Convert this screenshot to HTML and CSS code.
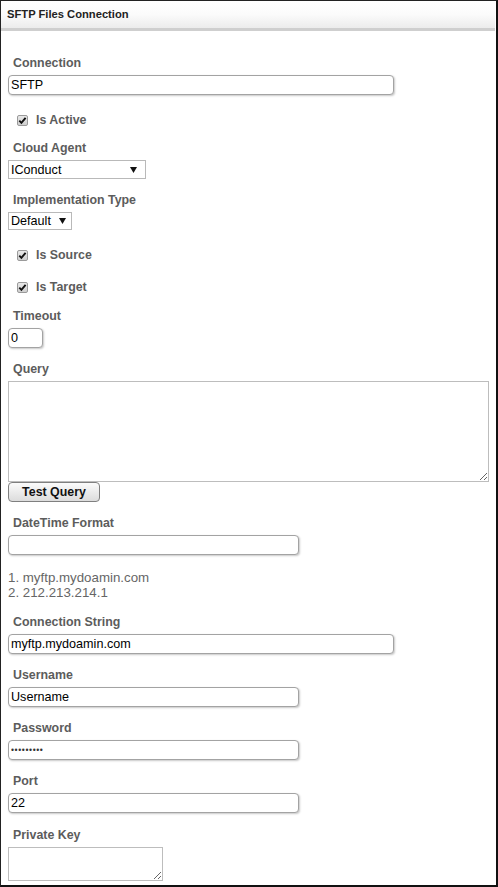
FILE: index.html
```html
<!DOCTYPE html>
<html>
<head>
<meta charset="utf-8">
<link rel="stylesheet" href="styles.css">
</head>
<body>
<div class="frame">
  <div class="header">SFTP Files Connection</div>
  <div class="form">
    <div class="field">
      <div class="label">Connection</div>
      <input class="input w-long" type="text" value="SFTP">
    </div>
    <div class="check first">
      <span class="box"><svg viewBox="0 0 11 11" width="11" height="11"><path d="M2.3 5.6 L4.4 7.8 L8.6 2.8" fill="none" stroke="#111" stroke-width="1.9"/></svg></span>
      <span class="check-text">Is Active</span>
    </div>
    <div class="field after-check">
      <div class="label">Cloud Agent</div>
      <div class="select w-agent"><span>IConduct</span><svg width="7" height="6" viewBox="0 0 7 6"><path d="M0 0 H7 L3.5 6 Z" fill="#111"/></svg></div>
    </div>
    <div class="field">
      <div class="label">Implementation Type</div>
      <div class="select w-impl"><span>Default</span><svg width="7" height="6" viewBox="0 0 7 6"><path d="M0 0 H7 L3.5 6 Z" fill="#111"/></svg></div>
    </div>
    <div class="check first">
      <span class="box"><svg viewBox="0 0 11 11" width="11" height="11"><path d="M2.3 5.6 L4.4 7.8 L8.6 2.8" fill="none" stroke="#111" stroke-width="1.9"/></svg></span>
      <span class="check-text">Is Source</span>
    </div>
    <div class="check">
      <span class="box"><svg viewBox="0 0 11 11" width="11" height="11"><path d="M2.3 5.6 L4.4 7.8 L8.6 2.8" fill="none" stroke="#111" stroke-width="1.9"/></svg></span>
      <span class="check-text">Is Target</span>
    </div>
    <div class="field after-check2">
      <div class="label">Timeout</div>
      <input class="input w-timeout" type="text" value="0">
    </div>
    <div class="field">
      <div class="label">Query</div>
      <div class="stack">
        <textarea class="area w-query"></textarea>
        <button class="button" type="button">Test Query</button>
      </div>
    </div>
    <div class="field">
      <div class="label">DateTime Format</div>
      <input class="input w-mid" type="text" value="">
    </div>
    <ol class="hints">
      <li>1. myftp.mydoamin.com</li>
      <li>2. 212.213.214.1</li>
    </ol>
    <div class="field after-hints">
      <div class="label">Connection String</div>
      <input class="input w-long" type="text" value="myftp.mydoamin.com">
    </div>
    <div class="field">
      <div class="label">Username</div>
      <input class="input w-mid" type="text" value="Username">
    </div>
    <div class="field">
      <div class="label">Password</div>
      <input class="input w-mid pwd" type="text" value="•••••••••">
    </div>
    <div class="field">
      <div class="label">Port</div>
      <input class="input w-mid" type="text" value="22">
    </div>
    <div class="field last">
      <div class="label">Private Key</div>
      <textarea class="area w-key"></textarea>
    </div>
  </div>
</div>
</body>
</html>
```

FILE: styles.css
```css
* { box-sizing: border-box; }
html, body { margin: 0; padding: 0; background: #fff; }
body { font-family: "Liberation Sans", Arial, sans-serif; }

.frame {
  width: 498px;
  height: 887px;
  border-top: 1px solid #222;
  border-left: 1px solid #222;
  border-right: 2px solid #111;
  border-bottom: 2px solid #111;
  overflow: hidden;
  background: #fff;
}

.header {
  height: 30px;
  padding: 5px 0 0 6px;
  background: linear-gradient(#ffffff 0%, #fbfbfb 50%, #ececec 100%);
  border-bottom: 3px solid #cfcfcf;
  font-size: 11.2px;
  font-weight: bold;
  color: #222;
  line-height: 16px;
  margin-right: 1px;
}

.form {
  display: flex;
  flex-direction: column;
  align-items: flex-start;
  gap: 13px;
  padding: 24px 0 0 7px;
}

.field {
  display: flex;
  flex-direction: column;
  align-items: flex-start;
  gap: 4px;
}
.field.after-check { margin-top: -1px; }
.field.after-check2 { margin-top: 0; }
.field.after-hints { margin-top: 1px; }
.field.last { margin-top: 1px; }

.label {
  padding-left: 5px;
  font-size: 12.4px;
  font-weight: bold;
  color: #5c5c5c;
  line-height: 16px;
  height: 16px;
}

.check {
  display: flex;
  align-items: center;
  gap: 8px;
  padding-left: 9px;
  height: 16px;
  margin-top: 3px;
}
.check.first { margin-top: 4px; }
.check + .check { margin-top: 3px; }

.box {
  width: 11px;
  height: 11px;
  border: 1px solid #9a9a9a;
  border-radius: 2px;
  background: linear-gradient(#e8e8e8, #cfcfcf);
  display: flex;
  align-items: center;
  justify-content: center;
  overflow: hidden;
}
.box svg { display: block; flex: none; }
.check-text {
  font-size: 12.4px;
  font-weight: bold;
  color: #5c5c5c;
  line-height: 16px;
}

.input {
  height: 20px;
  border: 1px solid #a3a3a3;
  border-radius: 4px;
  box-shadow: 1px 1px 2px rgba(0,0,0,0.22);
  padding: 0 2px;
  font-family: "Liberation Sans", Arial, sans-serif;
  font-size: 12.6px;
  color: #000;
  background: #fff;
  outline: none;
  margin: 0;
}
.pwd { font-size: 8.6px; letter-spacing: 0.6px; color: #333; }
.w-long { width: 386px; }
.w-mid { width: 291px; }
.w-timeout { width: 35px; }

.select {
  height: 19px;
  border: 1px solid #b9b9b9;
  background: #fff;
  display: flex;
  align-items: center;
  justify-content: space-between;
  padding: 0 8px 0 2px;
  font-size: 12.6px;
  color: #000;
}
.w-agent { width: 138px; }
.w-impl { width: 64px; height: 18px; padding-right: 5px; }

.stack {
  display: flex;
  flex-direction: column;
  align-items: flex-start;
}

.area {
  display: block;
  border: 1px solid #bdbdbd;
  border-radius: 0;
  margin: 0;
  padding: 2px;
  background: #fff;
  resize: both;
  outline: none;
}
.w-query { width: 481px; height: 101px; }
.w-key { width: 155px; height: 34px; }

.button {
  width: 92px;
  height: 20px;
  margin: 0;
  padding: 0;
  border: 1px solid #7f7f7f;
  border-radius: 4px;
  background: linear-gradient(#fbfbfb, #dcdcdc);
  font-family: "Liberation Sans", Arial, sans-serif;
  font-size: 12.4px;
  font-weight: bold;
  color: #111;
  line-height: 18px;
}

.hints {
  list-style: none;
  margin: 2px 0 0 0;
  padding: 0;
  font-size: 13.3px;
  color: #666;
  line-height: 15px;
}
.hints li { margin: 0; padding: 0; }
```
